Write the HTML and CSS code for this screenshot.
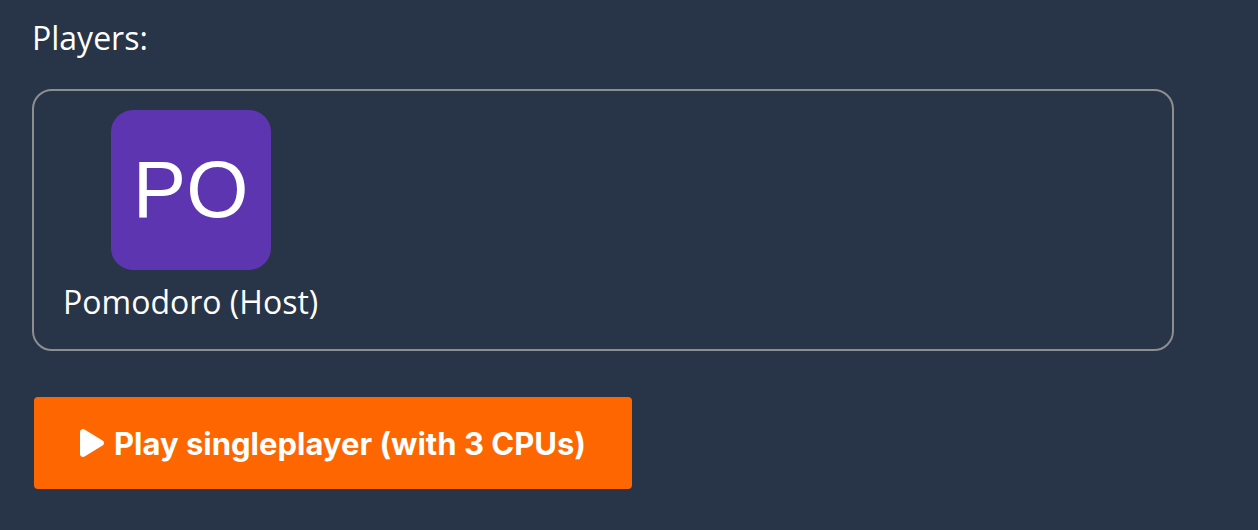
FILE: index.html
```html
<!DOCTYPE html>
<html lang="en">
<head>
<meta charset="utf-8">
<title>Lobby</title>
<link rel="stylesheet" href="styles.css">
</head>
<body>
<main class="lobby">
  <h2 class="section-title">Players:</h2>
  <div class="players-box">
    <div class="player">
      <div class="avatar">PO</div>
      <div class="player-name">Pomodoro (Host)</div>
    </div>
  </div>
  <button class="play-btn" type="button">
    <svg class="play-icon" viewBox="0 32 384 448" width="24" height="28" aria-hidden="true"><path fill="#fff" d="M73 39c-14.8-9.1-33.4-9.4-48.5-.9S0 62.6 0 80V432c0 17.4 9.4 33.4 24.5 41.9s33.7 8.1 48.5-.9L361 297c14.3-8.7 23-24.2 23-41s-8.7-32.2-23-41L73 39z"/></svg>
    <span>Play singleplayer (with 3 CPUs)</span>
  </button>
</main>
</body>
</html>
```
FILE: styles.css
```css
html, body {
  margin: 0;
  padding: 0;
  background: #283447;
}
body {
  font-family: "Open Sans", "Noto Sans", sans-serif;
  color: #ffffff;
}
.lobby {
  padding: 16px 0 0 32px;
  width: 1142px;
}
.section-title {
  margin: 0;
  font-size: 32px;
  font-weight: 400;
  line-height: 43.6px;
}
.players-box {
  margin-top: 29px;
  border: 2px solid #8d8e90;
  border-radius: 20px;
  padding: 19px 30px 26px 29px;
  display: flex;
  gap: 20px;
}
.player {
  display: flex;
  flex-direction: column;
  align-items: center;
  gap: 10px;
}
.avatar {
  width: 160px;
  height: 160px;
  border-radius: 22px;
  background: #5e35b1;
  display: flex;
  align-items: center;
  justify-content: center;
  font-family: "Liberation Sans", Arial, sans-serif;
  font-size: 80px;
  color: #ffffff;
  line-height: 1;
}
.player-name {
  font-size: 32px;
  line-height: 43.6px;
  white-space: nowrap;
}
.play-btn {
  margin: 46px 0 0 2px;
  width: 598px;
  height: 92px;
  border: none;
  border-radius: 4px;
  background: #fd6600;
  color: #ffffff;
  font-family: "Inter", "Liberation Sans", sans-serif;
  font-weight: 700;
  font-size: 31px;
  display: flex;
  align-items: center;
  justify-content: center;
  gap: 10px;
  padding: 0;
}
.play-icon {
  display: block;
}
```
